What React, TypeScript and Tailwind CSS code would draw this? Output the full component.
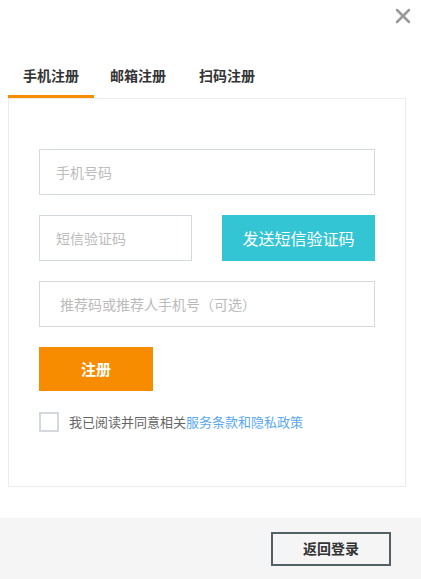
import { X } from "lucide-react";

const font = { fontFamily: '"Noto Sans CJK SC", "Noto Sans", sans-serif' };

const App = () => {
  return (
    <div className="w-[421px] h-[579px] bg-white flex flex-col relative" style={font}>
      <button className="absolute left-[391px] top-[4px] text-[#999]">
        <X size={24} strokeWidth={2.5} />
      </button>

      <div className="flex-1 px-2 pt-[61px]">
        <div className="flex h-[37px] text-[14px] font-bold text-[#333]">
          <div className="w-[86px] flex justify-center items-start pt-[4px] border-b-[3px] border-[#f88c00]">
            <span className="leading-[20px]">手机注册</span>
          </div>
          <div className="ml-[16px] pt-[4px]">
            <span className="leading-[20px]">邮箱注册</span>
          </div>
          <div className="ml-[33px] pt-[4px]">
            <span className="leading-[20px]">扫码注册</span>
          </div>
        </div>

        <div className="w-[398px] h-[389px] border border-[#ececec] flex flex-col px-[30px] pt-[50px]">
          <div className="w-[336px] h-[46px] border border-[#d4d9e0] flex items-center pl-[16px] text-[14px] text-[#bbb]">
            手机号码
          </div>
          <div className="flex justify-between w-[336px] mt-[20px]">
            <div className="w-[153px] h-[46px] border border-[#d4d9e0] flex items-center pl-[16px] text-[14px] text-[#bbb]">
              短信验证码
            </div>
            <button className="w-[153px] h-[46px] bg-[#33c5d3] text-white text-[16px]">
              发送短信验证码
            </button>
          </div>
          <div className="w-[336px] h-[46px] mt-[20px] border border-[#d4d9e0] flex items-center pl-[20px] text-[14px] text-[#bbb]">
            推荐码或推荐人手机号（可选）
          </div>
          <button className="w-[114px] h-[44px] mt-[20px] bg-[#f88c00] text-white text-[15px] font-bold">
            注册
          </button>
          <div className="flex items-center mt-[21px] text-[13px]">
            <div className="w-[20px] h-[20px] border-2 border-[#d4d9e0] bg-white" />
            <span className="ml-[10px] text-[#666]">我已阅读并同意相关</span>
            <span className="text-[#5aa9f2]">服务条款和隐私政策</span>
          </div>
        </div>
      </div>

      <div className="h-[61px] bg-[#f5f5f5] flex items-center justify-end pr-[30px]">
        <button className="w-[120px] h-[34px] border-2 border-[#555f66] text-[14px] font-bold text-[#333] bg-[#f5f5f5]">
          返回登录
        </button>
      </div>
    </div>
  );
};

export default App;
